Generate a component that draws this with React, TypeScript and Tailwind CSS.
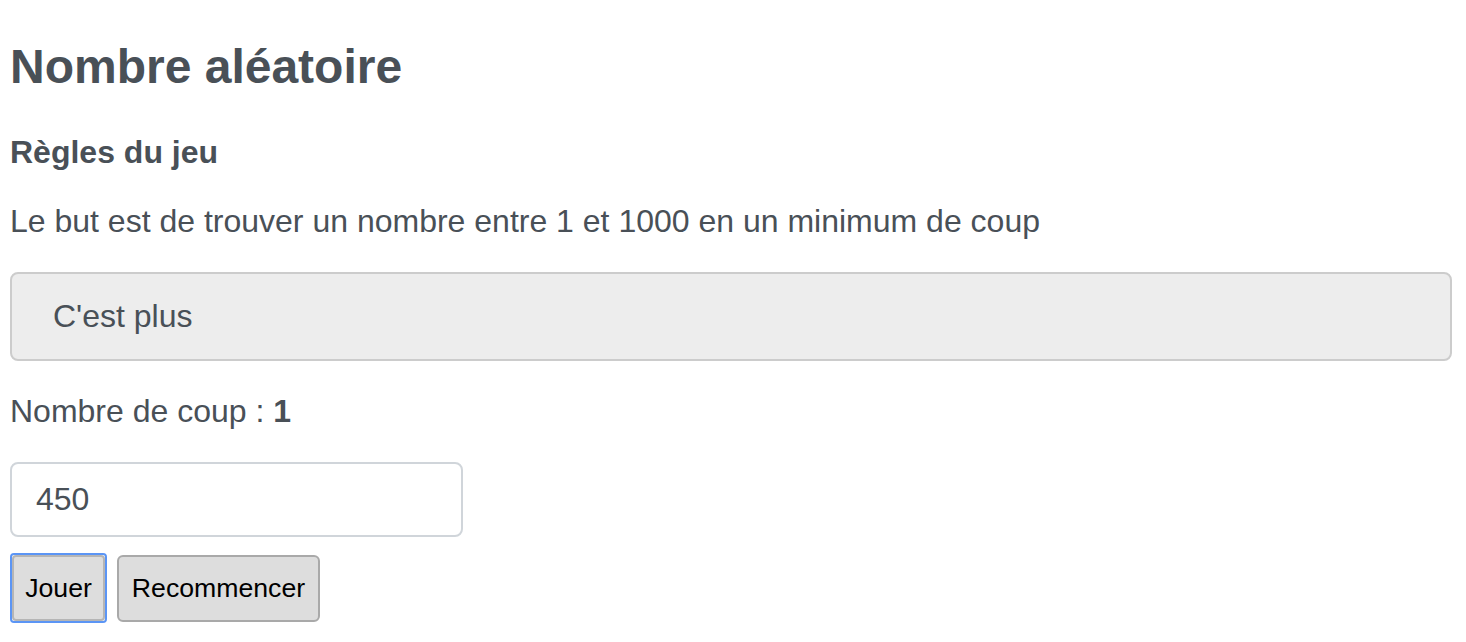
import { useState } from 'react';

export default function App() {
    // Number guessing game state
    const [guess, setGuess] = useState('450');
    const [count] = useState(1);

    return (
        <div className="flex flex-col pl-[10px] pr-[14px] font-['Liberation_Sans',Arial,sans-serif] text-[#495057]">
            {/* Title */}
            <h1 className="mt-[39px] text-[48px] leading-[55px] font-bold">
                Nombre aléatoire
            </h1>

            {/* Rules */}
            <h5 className="mt-[40px] text-[32px] leading-[37px] font-bold">
                Règles du jeu
            </h5>
            <p className="mt-[32px] text-[32px] leading-[37px]">
                Le but est de trouver un nombre entre 1 et 1000 en un minimum de
                coup
            </p>

            {/* Hint box */}
            <div className="mt-[32px] rounded-[8px] border-2 border-[#cccccc] bg-[#ededed] pt-[23px] pb-[24px] pl-[41px] text-[32px] leading-[38px]">
                C'est plus
            </div>

            <p className="mt-[32px] text-[32px] leading-[37px]">
                Nombre de coup : <strong className="font-bold">{count}</strong>
            </p>

            {/* Guess input */}
            <input
                type="text"
                value={guess}
                onChange={e => setGuess(e.target.value)}
                className="mt-[32px] h-[75px] w-[453px] rounded-[8px] border-2 border-[#d0d5da] bg-white pl-[24px] text-[32px] text-[#495057] outline-none"
            />

            {/* Actions */}
            <div className="mt-[16px] flex items-center text-[26.67px] text-black">
                <div className="rounded-[4px] border-2 border-[#5b95f5]">
                    <button className="h-[66px] w-[93px] rounded-[4px] border-2 border-[#b5b5b5] bg-[#dddddd] leading-[31px]">
                        Jouer
                    </button>
                </div>
                <button className="ml-[10px] h-[67px] w-[203px] rounded-[6px] border-2 border-[#a9a9a9] bg-[#dddddd] leading-[31px]">
                    Recommencer
                </button>
            </div>
        </div>
    );
}
